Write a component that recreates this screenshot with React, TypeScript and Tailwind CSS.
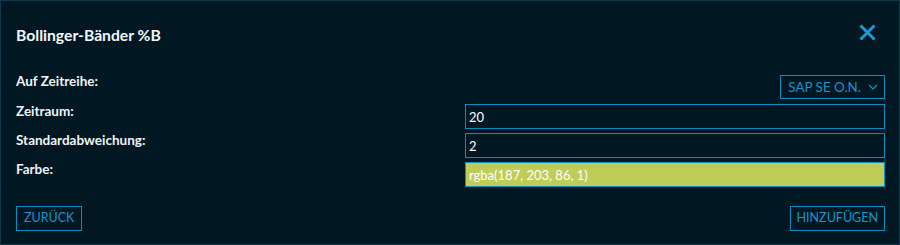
import React from "react"

const fieldCls =
    "h-[25px] w-[420px] border border-[#0a8fc2] bg-[#011722] px-[3px] text-[13px] text-white outline-none"

const Row = ({ label, children, className = "" }: any) => (
    <div className={`flex items-start justify-between ${className}`}>
        <span className="-mt-px text-[13.5px] font-bold leading-4 text-[#f0f4f6]">{label}</span>
        {children}
    </div>
)

export default function App() {
    return (
        <div
            className="flex h-[245px] w-[900px] flex-col border border-[#0c3a4b] bg-[#011722] pl-[15px] pr-[14px] pt-[22px]"
            style={{ fontFamily: "Lato, 'Noto Sans', sans-serif" }}
        >
            <div className="flex h-[24px] items-center justify-between">
                <h1 className="mt-px text-[15.7px] font-bold text-[#f4f7f8]">Bollinger-Bänder %B</h1>
                <svg width="17" height="17" viewBox="0 0 17 17" className="mr-[9px] mt-[-6px]">
                    <path d="M1.5 1.5 L15.5 15.5 M15.5 1.5 L1.5 15.5" stroke="#1a9ad6" strokeWidth="3" />
                </svg>
            </div>

            <Row label="Auf Zeitreihe:" className="mt-[27px]">
                <button className="mt-[1px] flex h-[24px] items-center gap-[7px] border border-[#0a8fc2] pl-[7px] pr-[6px] text-[13.4px] text-[#1596cd]">
                    SAP SE O.N.
                    <svg width="10" height="6" viewBox="0 0 10 6">
                        <path d="M1 1 L5 5 L9 1" stroke="#1596cd" strokeWidth="1.2" fill="none" />
                    </svg>
                </button>
            </Row>
            <Row label="Zeitraum:" className="mt-[5px]">
                <input className={fieldCls} defaultValue="20" />
            </Row>
            <Row label="Standardabweichung:" className="mt-[4px]">
                <input className={fieldCls} defaultValue="2" />
            </Row>
            <Row label="Farbe:" className="mt-[4px]">
                <input
                    className={`${fieldCls} bg-[#bfcc57]`}
                    defaultValue="rgba(187, 203, 86, 1)"
                />
            </Row>

            <div className="mt-[19px] flex justify-between">
                <button className="h-[25px] border border-[#0a8fc2] px-[7px] text-[12.5px] text-[#1596cd]">
                    ZURÜCK
                </button>
                <button className="h-[25px] border border-[#0a8fc2] px-[6px] text-[12.5px] text-[#1596cd]">
                    HINZUFÜGEN
                </button>
            </div>
        </div>
    )
}
